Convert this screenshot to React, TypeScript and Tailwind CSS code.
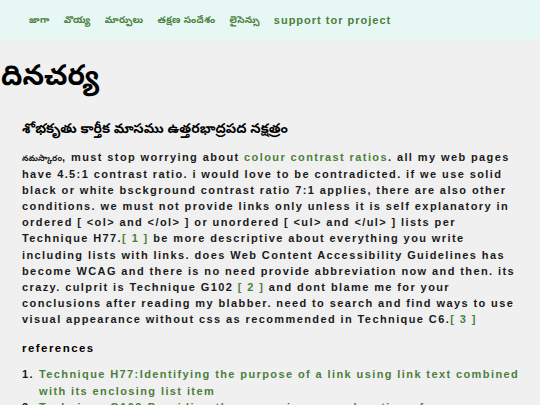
const navItems = [
  { label: "జాగా", te: true },
  { label: "వొయ్య", te: true },
  { label: "మార్పులు", te: true },
  { label: "తక్షణ సందేశం", te: true },
  { label: "లైసెన్సు", te: true },
  { label: "support tor project", te: false },
];

const references = [
  "Technique H77:Identifying the purpose of a link using link text combined with its enclosing list item",
  "Technique G102:Providing the expansion or explanation of an abbreviation",
  "Technique C6:Positioning content based on structural markup",
];

function Ref({ n }: { n: number }) {
  return <a className="text-[#4b7f3c]">[ {n} ]</a>;
}

export default function App() {
  return (
    <div className="min-h-[405px] bg-[#f0f0f0] font-['Liberation_Sans','Noto_Sans_Telugu',sans-serif] text-[#1a1a1a]">
      <nav className="flex h-[40px] items-center gap-[14px] bg-[#e6f7f4] pl-[29px] font-bold text-[#4b7f3c]">
        {navItems.map((item) => (
          <a
            key={item.label}
            className={item.te ? "text-[9.5px] tracking-[0.3px]" : "text-[11px] tracking-[1px]"}
          >
            {item.label}
          </a>
        ))}
      </nav>

      <h1 className="mt-[12px] pl-[1px] text-[28px] leading-[48px] font-bold text-black">దినచర్య</h1>

      <main className="px-[22px]">
        <h2 className="mt-[17px] text-[13.5px] leading-[24px] font-bold text-black">
          శోభకృతు కార్తీక మాసము ఉత్తరభాద్రపద నక్షత్రం
        </h2>

        <p className="mt-[8px] text-[11px] leading-[16.1px] font-bold tracking-[1.4px]">
          <span className="text-[8.5px] tracking-normal">నమస్కారం</span>, must stop worrying about{" "}
          <a className="text-[#4b7f3c]">colour contrast ratios</a>. all my web pages have 4.5:1 contrast ratio. i
          would love to be contradicted. if we use solid black or white bsckground contrast ratio 7:1 applies,
          there are also other conditions. we must not provide links only unless it is self explanatory in ordered
          [ &lt;ol&gt; and &lt;/ol&gt; ] or unordered [ &lt;ul&gt; and &lt;/ul&gt; ] lists per Technique H77.
          <Ref n={1} /> be more descriptive about everything you write including lists with links. does Web Content
          Accessibility Guidelines has become WCAG and there is no need provide abbreviation now and then. its
          crazy. culprit is Technique G102 <Ref n={2} /> and dont blame me for your conclusions after reading my
          blabber. need to search and find ways to use visual appearance without css as recommended in Technique
          C6.<Ref n={3} />
        </p>

        <h3 className="mt-[12px] text-[11.5px] leading-[18px] font-bold tracking-[1.45px] text-black">
          references
        </h3>

        <ol className="mt-[9px] -mr-[4px] flex flex-col text-[11px] leading-[16.5px] font-bold tracking-[1.4px]">
          {references.map((r, i) => (
            <li key={r} className="flex">
              <span className="w-[17px] shrink-0">{i + 1}.</span>
              <a className="text-[#4b7f3c]">{r}</a>
            </li>
          ))}
        </ol>
      </main>
    </div>
  );
}
